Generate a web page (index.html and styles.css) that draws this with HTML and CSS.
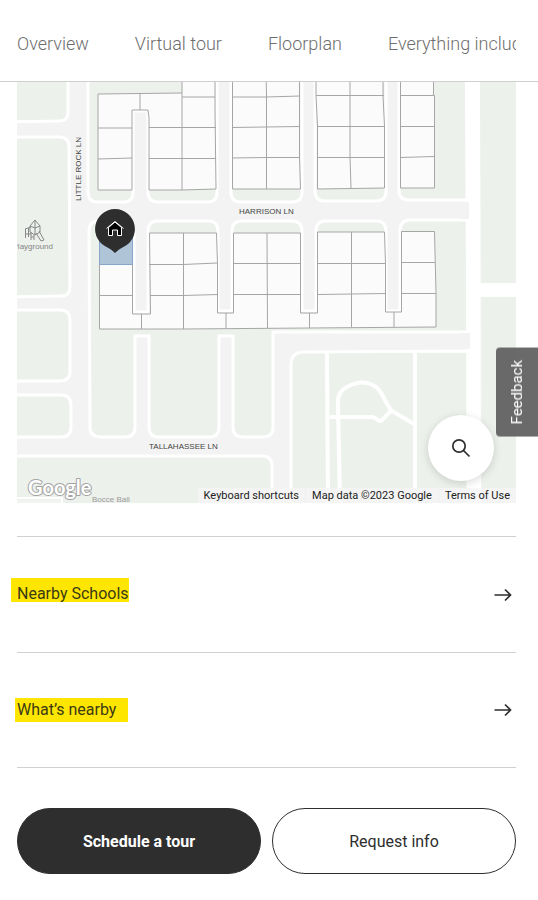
FILE: index.html
```html
<!DOCTYPE html>
<html lang="en">
<head>
  <meta charset="UTF-8">
  <meta name="viewport" content="width=device-width, initial-scale=1.0">
  <title>Neighborhood</title>
  <link rel="stylesheet" href="styles.css">
</head>
<body>
  <header class="header">
    <nav class="tabs" aria-label="Sections">
      <a href="#overview">Overview</a>
      <a href="#virtual-tour">Virtual tour</a>
      <a href="#floorplan">Floorplan</a>
      <a href="#included">Everything included</a>
    </nav>
  </header>

  <main class="content">
    <section class="map" aria-label="Map">
      <svg class="map-canvas" viewBox="17 82 499 421" preserveAspectRatio="xMidYMid slice">
        <rect class="road" x="17" y="82" width="499" height="421"/>

        <!-- blocks -->
        <g class="block">
          <path d="M10 70H68V112Q68 121 59 121L10 122Z"/>
          <path d="M10 137H59Q69 137 69 147L70 287Q70 296 61 296L10 297Z"/>
          <path d="M10 310H60Q70 310 70 320V371Q70 381 60 381H10Z"/>
          <path d="M10 395H61Q71 395 71 405V427Q71 437 61 437H10Z"/>
          <path d="M10 456H262Q272 456 272 466V510H10Z"/>
          <path d="M88 70V192Q88 202 98 202H124Q133 202 133 192V111H148V192Q148 202 158 202H208Q217 202 217 192V70Z"/>
          <path d="M231 70V192Q231 202 241 202H292Q302 202 302 192V70Z"/>
          <path d="M315 70V191Q315 201 325 201H376Q386 201 386 191V70Z"/>
          <path d="M399 70V190Q399 200 409 200H468V70Z"/>
          <path d="M89 231Q89 221 99 221H124Q134 221 134 231V312H148V231Q148 221 158 221H208Q218 221 218 231V311H232V231Q232 221 242 221H292Q302 221 302 231V311H316V231Q316 221 326 221H376Q386 221 386 231V311H400V231Q400 220 410 220H468V332H273V427Q273 437 263 437H243Q233 437 233 427V336H219V427Q219 437 209 437H159Q149 437 149 427V336H135V427Q135 437 125 437H101Q90 437 90 427Z"/>
          <path d="M291 510V365Q291 352 304 352L468 351V510Z"/>
        </g>
        <path class="walk walk-inner" d="M17 498H62V503"/>
        <rect class="road" x="17" y="500" width="44" height="3"/>

        <!-- main street on the east side -->
        <path class="street" d="M465 82H480L481 503H467Z"/>
        <path class="green" d="M480 82H516V283H481.500Z"/>
        <rect class="street" x="467" y="283" width="49" height="14"/>
        <rect class="green" x="481.500" y="297" width="34.500" height="206"/>
        <rect class="road" x="460" y="202" width="9" height="17"/>
        <rect class="road" x="460" y="333" width="10" height="16"/>

        <!-- park paths -->
        <g class="walk">
          <path d="M327 352L328 503"/>
          <path d="M415 352V503"/>
          <path d="M340 503L338 404Q337 392 347 387Q363 378 376 387Q380 390 383 396Q388 407 392 411L414 424"/>
          <path d="M330 417H371Q375 417 378 420Q380 422 382 420L391 411"/>
        </g>

        <!-- lots -->
        <g class="lots">
          <path d="M98 94L182 93V70H215V110L216 189L182 190H149V118L148 110H132V190H98Z"/>
          <path d="M140 94V110M98 128H132M98 159L132 158M149 127.500H216M149 158.500H216M182 93V190M182 97H215"/>
          <path d="M232.500 70H299.500V157L300.500 189H232.500Z"/>
          <path d="M232 97H266L300 96M232 127.500L300 126.500M232 158L266 157.500H300M266 70L266.500 96V189"/>
          <path d="M316 70H383V96L384.500 126V188L317.500 189V126L316 96Z"/>
          <path d="M316 95.500H384M317 126.500H384.500M317 157.500H384.500M350 70V157L351 188"/>
          <path d="M400.500 70H433.500V95.500H434.500V188H400.500Z"/>
          <path d="M400.500 95.500H434M400.500 126.500H434.500M400.500 157.500L434.500 156.500"/>
          <path d="M99.500 233H132.500V314H150.500L149.500 233H216.500L217.500 264V313H233.500V233H300.500V313H317.500V232H384.500L385.500 264V312H401.500V231.500H434.500L436 293V327L309 328L183 329H99.500Z"/>
          <path d="M99 295.500H133M149 264.500H183L217 263M150 295.500H183L218 294.500M233 263.500H301M233 294.500H301M317 263.500H385M318 294.500L386 293.500M401 262.500H435M401 293.500H436M183.500 233V329M267 233L267.500 328M351.500 232V327M141.500 314V329M226 313V328M309.500 313V328M394 312V327"/>
          <path class="lot-active" d="M99.500 233H132.500V264.500H99.500Z"/>
        </g>

        <!-- playground -->
        <g class="playground">
          <path d="M30 226L35 220L40 226V232L35 235L30 232ZM30 226L35 228L40 226M35 220V235"/>
          <path d="M25.500 229V238M28.500 228V237M25 229L31 227M25 234H31M31 232V240M34 235V240M31 237H34M36 233L41 241L44 240L39 231"/>
        </g>

        <text class="label label-poi" x="53" y="249" text-anchor="end">Playground</text>
        <text class="label label-poi label-faint" x="92" y="502">Bocce Ball</text>
        <text class="label" transform="translate(81 201) rotate(-90)">LITTLE ROCK LN</text>
        <text class="label" x="239" y="214">HARRISON LN</text>
        <text class="label" x="149" y="449">TALLAHASSEE LN</text>
        <text class="google" x="28" y="495">Google</text>

        <!-- home pin -->
        <path class="pin" d="M115 209A20 20 0 0 1 122 247.700Q119 249 115 253Q111 249 108 247.700A20 20 0 0 1 115 209Z"/>
        <path class="pin-house" d="M108.500 227.500V235.500H112.500V230H117.500V235.500H121.500V227.500L115 222Z"/>
        <path class="pin-roof" d="M106.500 228.500L115 221.500L123.500 228.500"/>
      </svg>

      <button class="search" type="button" aria-label="Search the map">
        <svg width="20" height="20" viewBox="0 0 20 20">
          <circle cx="8" cy="8" r="6.200"/>
          <path d="M12.500 12.500L18.500 18.500"/>
        </svg>
      </button>

      <div class="attribution">
        <button type="button">Keyboard shortcuts</button>
        <span>Map data ©2023 Google</span>
        <a href="#terms">Terms of Use</a>
      </div>
    </section>

    <section class="links">
      <a class="link-row" href="#schools">
        <mark class="mark-high">Nearby Schools</mark>
        <svg class="arrow" width="18" height="14" viewBox="0 0 18 14"><path d="M0.500 7H16.500M11 1.500L16.500 7L11 12.500"/></svg>
      </a>
      <a class="link-row" href="#nearby">
        <mark class="mark-wide">What’s nearby</mark>
        <svg class="arrow" width="18" height="14" viewBox="0 0 18 14"><path d="M0.500 7H16.500M11 1.500L16.500 7L11 12.500"/></svg>
      </a>
    </section>

    <div class="actions">
      <button class="btn btn-dark" type="button">Schedule a tour</button>
      <button class="btn" type="button">Request info</button>
    </div>
  </main>

  <button class="feedback" type="button">Feedback</button>
</body>
</html>
```

FILE: styles.css
```css
:root {
  --dark: #2e2e2e;
  --nav: #6e6e6e;
  --line: #d0d0d0;
  --road: #f3f3f3;
  --grass: #ecf1ec;
  --highlight: #ffe600;
}

* {
  margin: 0;
  padding: 0;
  box-sizing: border-box;
}

body {
  font-family: Roboto, 'Liberation Sans', sans-serif;
  background: #fff;
  color: var(--dark);
}

a {
  color: inherit;
  text-decoration: none;
}

button {
  font-family: inherit;
  color: inherit;
  cursor: pointer;
}

.header {
  padding: 0 22px 0 17px;
  border-bottom: 1px solid var(--line);
}

.tabs {
  display: flex;
  gap: 46px;
  padding: 32px 0 25px;
  overflow: hidden;
  white-space: nowrap;
  font-size: 18px;
  font-weight: 300;
  line-height: 24px;
  color: var(--nav);
}

.content {
  padding: 0 22px 26px 17px;
}

/* Map */
.map {
  position: relative;
  height: 421px;
  overflow: hidden;
}

.map-canvas {
  display: block;
  width: 100%;
  height: 100%;
}

.road {
  fill: var(--road);
}

.green {
  fill: var(--grass);
}

.street {
  fill: #fff;
}

.block {
  fill: var(--grass);
  stroke: #fff;
  stroke-width: 3;
}

.walk {
  fill: none;
  stroke: #fff;
  stroke-width: 4;
}

.walk-inner {
  stroke-width: 2;
}

.lots {
  fill: #fbfbfb;
  stroke: #a6a6a6;
  stroke-width: 1;
}

.lots .lot-active {
  fill: #b0c4d7;
  stroke: #86a6cb;
}

.playground {
  fill: none;
  stroke: #888;
  stroke-width: 1;
}

.label {
  font-family: 'Liberation Sans', sans-serif;
  font-size: 8px;
  fill: #444;
}

.label-poi {
  fill: #858585;
}

.label-faint {
  fill: #999;
}

.google {
  font-family: Lato, sans-serif;
  font-size: 20px;
  font-weight: 700;
  fill: #fff;
  stroke: #a3a3a3;
  stroke-width: 2;
  stroke-linejoin: round;
  paint-order: stroke;
}

.pin {
  fill: var(--dark);
}

.pin-house {
  fill: #000;
  stroke: #fff;
  stroke-width: 1;
}

.pin-roof {
  fill: none;
  stroke: #fff;
  stroke-width: 1;
}

.search {
  position: absolute;
  right: 22px;
  bottom: 22px;
  display: flex;
  align-items: center;
  justify-content: center;
  width: 66px;
  height: 66px;
  border: none;
  border-radius: 50%;
  background: #fff;
  box-shadow: 0 2px 8px rgba(0, 0, 0, 0.15);
}

.search svg,
.arrow {
  fill: none;
  stroke: var(--dark);
  stroke-width: 1.7;
}

.attribution {
  position: absolute;
  right: 0;
  bottom: 0;
  display: flex;
  gap: 1px;
  font-size: 11px;
  line-height: 15px;
  color: #222;
}

.attribution > * {
  padding: 0 6px;
  border: none;
  background: rgba(245, 245, 245, 0.8);
  font-size: inherit;
  line-height: inherit;
}

/* Links */
.links {
  margin-top: 33px;
  border-bottom: 1px solid var(--line);
}

.link-row {
  display: flex;
  align-items: center;
  justify-content: space-between;
  padding: 45px 4px 45px 0;
  border-top: 1px solid var(--line);
  font-size: 16px;
  line-height: 24px;
}

mark {
  background: var(--highlight);
  color: #3b3a16;
}

.mark-high {
  margin: -4px 0 5px -6px;
  padding: 8px 0 0 6px;
  line-height: 16px;
}

.mark-wide {
  margin-left: -2px;
  padding: 0 12px 0 2px;
}

/* Buttons */
.actions {
  display: flex;
  gap: 11px;
  margin-top: 40px;
}

.btn {
  flex: 1;
  height: 66px;
  border: 1px solid var(--dark);
  border-radius: 33px;
  background: #fff;
  font-size: 16px;
}

.btn-dark {
  background: var(--dark);
  color: #fff;
  font-weight: 700;
}

.feedback {
  position: fixed;
  top: 348px;
  right: 0;
  padding: 12px;
  border: none;
  border-radius: 0 4px 4px 0;
  background: rgba(90, 90, 90, 0.9);
  color: #fff;
  font-size: 15px;
  line-height: 18px;
  writing-mode: vertical-rl;
  transform: rotate(180deg);
}
```
